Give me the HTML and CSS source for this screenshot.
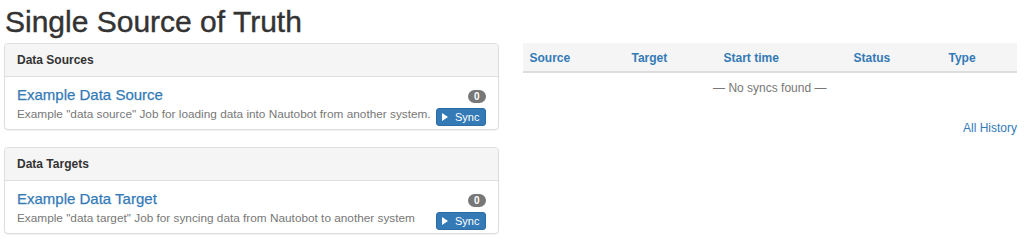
FILE: index.html
```html
<!DOCTYPE html>
<html lang="en">
<head>
  <meta charset="UTF-8">
  <meta name="viewport" content="width=device-width, initial-scale=1.0">
  <title>Single Source of Truth</title>
  <link rel="stylesheet" href="styles.css">
</head>
<body>
  <h1 class="page-title">Single Source of Truth</h1>

  <div class="row">
    <div class="col">
      <div class="panel">
        <div class="panel-heading">Data Sources</div>
        <div class="panel-body">
          <div class="job-info">
            <a href="#" class="job-name">Example Data Source</a>
            <div class="job-desc">Example "data source" Job for loading data into Nautobot from another system.</div>
          </div>
          <div class="job-actions">
            <span class="badge">0</span>
            <a href="#" class="btn-sync"><span class="play"></span>Sync</a>
          </div>
        </div>
      </div>

      <div class="panel">
        <div class="panel-heading">Data Targets</div>
        <div class="panel-body">
          <div class="job-info">
            <a href="#" class="job-name">Example Data Target</a>
            <div class="job-desc">Example "data target" Job for syncing data from Nautobot to another system</div>
          </div>
          <div class="job-actions">
            <span class="badge">0</span>
            <a href="#" class="btn-sync"><span class="play"></span>Sync</a>
          </div>
        </div>
      </div>
    </div>

    <div class="col">
      <table class="sync-table">
        <thead>
          <tr>
            <th class="col-source"><a href="#">Source</a></th>
            <th class="col-target"><a href="#">Target</a></th>
            <th class="col-start"><a href="#">Start time</a></th>
            <th class="col-status"><a href="#">Status</a></th>
            <th class="col-type"><a href="#">Type</a></th>
          </tr>
        </thead>
        <tbody>
          <tr>
            <td colspan="5" class="empty">&mdash; No syncs found &mdash;</td>
          </tr>
        </tbody>
      </table>
      <div class="history-link"><a href="#">All History</a></div>
    </div>
  </div>
</body>
</html>
```

FILE: styles.css
```css
body, html {
  margin: 0;
  padding: 0;
  font-family: "Liberation Sans", Arial, sans-serif;
  font-size: 12px;
  color: #333;
  background-color: #fff;
}

a {
  color: #337ab7;
  text-decoration: none;
}

.page-title {
  margin: 5px 0 5px 5px;
  font-size: 30px;
  line-height: 33px;
  font-weight: 400;
  color: #333;
  -webkit-text-stroke: 0.4px #333;
}

.row {
  display: grid;
  grid-template-columns: minmax(0, 1fr) minmax(0, 1fr);
  gap: 24px;
  padding: 0 7px 0 4px;
}

.panel {
  border: 1px solid #ddd;
  border-radius: 4px;
  background-color: #fff;
  box-shadow: 0 1px 1px rgba(0,0,0,0.05);
  margin-bottom: 17px;
}

.panel-heading {
  background-color: #f5f5f5;
  border-bottom: 1px solid #ddd;
  border-radius: 3px 3px 0 0;
  padding: 0 12px;
  height: 32px;
  line-height: 32px;
  font-weight: 700;
  font-size: 12px;
}

.panel-body {
  display: flex;
  justify-content: space-between;
  padding: 9px 12px 3px;
}

.job-info {
  min-width: 0;
}

.job-name {
  display: block;
  font-size: 15px;
  line-height: 18px;
  margin-bottom: 2px;
  -webkit-text-stroke: 0.25px #337ab7;
}

.job-desc {
  color: #777;
  font-size: 11.8px;
  line-height: 16px;
  white-space: nowrap;
}

.job-actions {
  display: flex;
  flex-direction: column;
  align-items: flex-end;
  flex-shrink: 0;
  gap: 5px;
  padding-top: 4px;
}

.badge {
  display: inline-block;
  background-color: #777;
  color: #fff;
  font-size: 10px;
  font-weight: 700;
  height: 13px;
  line-height: 13px;
  padding: 0 6px;
  border-radius: 7px;
}

.btn-sync {
  display: flex;
  align-items: center;
  height: 16px;
  padding: 0 5px 0 5px;
  background-color: #337ab7;
  border: 1px solid #2e6da4;
  border-radius: 3px;
  color: #fff;
  font-size: 11px;
}

.play {
  width: 0;
  height: 0;
  border-top: 4px solid transparent;
  border-bottom: 4px solid transparent;
  border-left: 6px solid #fff;
  margin-right: 7px;
}

.sync-table {
  width: 100%;
  border-collapse: collapse;
  border-spacing: 0;
  margin-bottom: 17px;
}

.sync-table th {
  background-color: #f5f5f5;
  border-bottom: 2px solid #ddd;
  text-align: left;
  font-weight: 700;
  padding: 7px 7px 5px;
  line-height: 16px;
}

.col-source { width: 88px; }
.col-target { width: 78px; }
.col-start { width: 116px; }
.col-status { width: 81px; }

.sync-table td {
  padding: 7px;
  line-height: 16px;
}

.empty {
  text-align: center;
  color: #777;
}

.history-link {
  text-align: right;
  line-height: 16px;
}
```
